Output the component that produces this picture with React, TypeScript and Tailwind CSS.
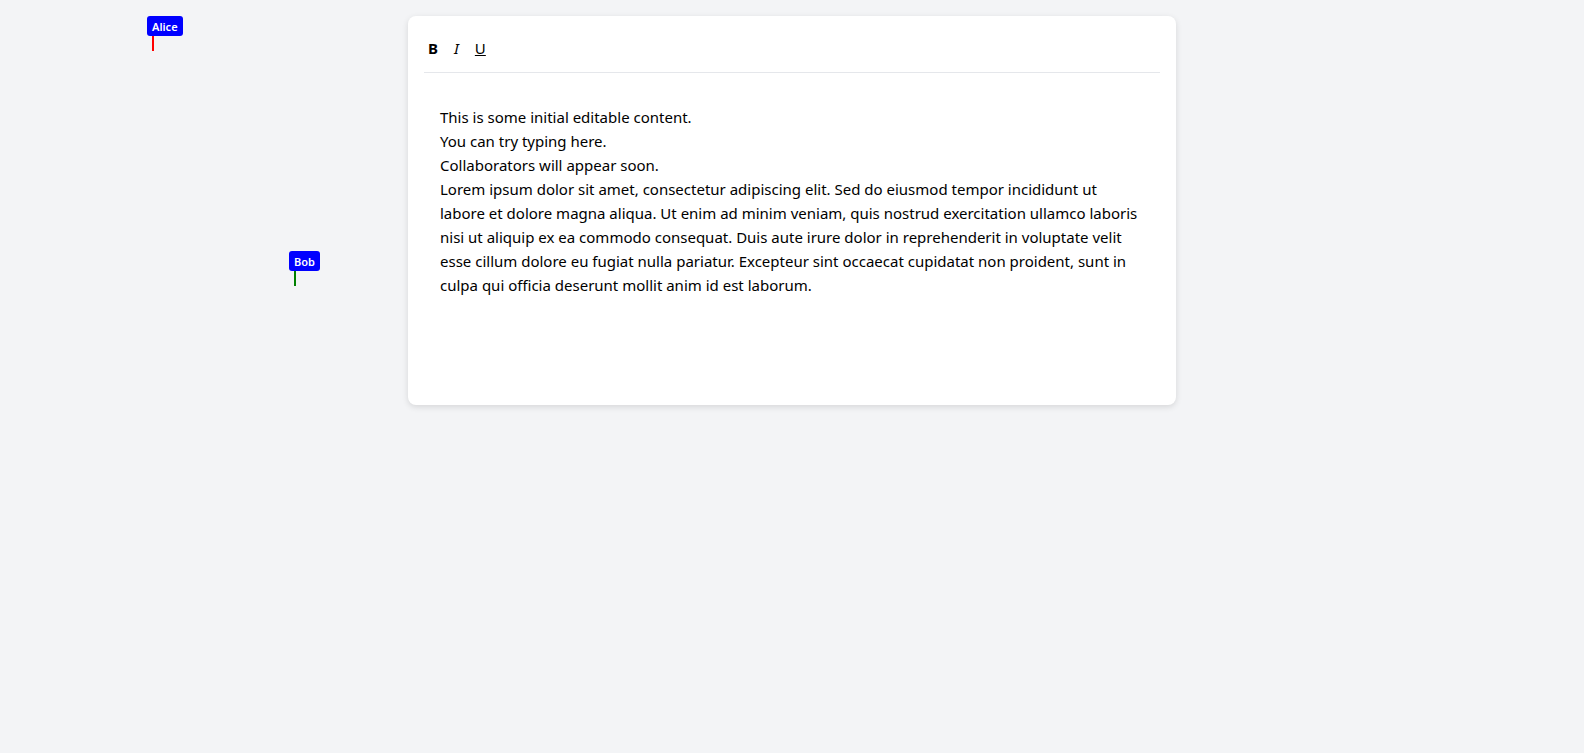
import React from "react";

function Cursor({ name, color, left, top }: { name: string; color: string; left: number; top: number }) {
  return (
    <div className="absolute flex flex-col items-start" style={{ left, top }}>
      <div className="rounded-[3px] bg-[#0000ff] px-[5px] h-5 flex items-center text-[11px] font-semibold text-white leading-none">
        {name}
      </div>
      <div className="ml-[5px] h-[15px] w-[2px]" style={{ backgroundColor: color }} />
    </div>
  );
}

export default function App() {
  return (
    <div
      className="relative min-h-[753px] bg-[#f3f4f6] pt-4 text-black"
      style={{ fontFamily: '"Noto Sans", "Open Sans", sans-serif' }}
    >
      <Cursor name="Alice" color="#ff0000" left={147} top={16} />
      <Cursor name="Bob" color="#008000" left={289} top={251} />
      <div className="mx-auto w-[768px] rounded-lg bg-white p-4 shadow-[0_2px_6px_rgba(0,0,0,0.12)]">
        <div className="flex items-center gap-2 border-b border-[#e5e7eb] pb-2">
          <button className="h-8 px-1 text-[15px] font-bold">B</button>
          <button className="h-8 px-1 text-[15px] italic">I</button>
          <button className="h-8 px-1 text-[15px] underline">U</button>
        </div>
        <div className="mt-4 min-h-[300px] p-4 text-[15px] leading-6 outline-none">
          <div>This is some initial editable content.</div>
          <div>You can try typing here.</div>
          <div>Collaborators will appear soon.</div>
          <div>
            Lorem ipsum dolor sit amet, consectetur adipiscing elit. Sed do eiusmod tempor incididunt ut labore et
            dolore magna aliqua. Ut enim ad minim veniam, quis nostrud exercitation ullamco laboris nisi ut aliquip ex
            ea commodo consequat. Duis aute irure dolor in reprehenderit in voluptate velit esse cillum dolore eu
            fugiat nulla pariatur. Excepteur sint occaecat cupidatat non proident, sunt in culpa qui officia deserunt
            mollit anim id est laborum.
          </div>
        </div>
      </div>
    </div>
  );
}
